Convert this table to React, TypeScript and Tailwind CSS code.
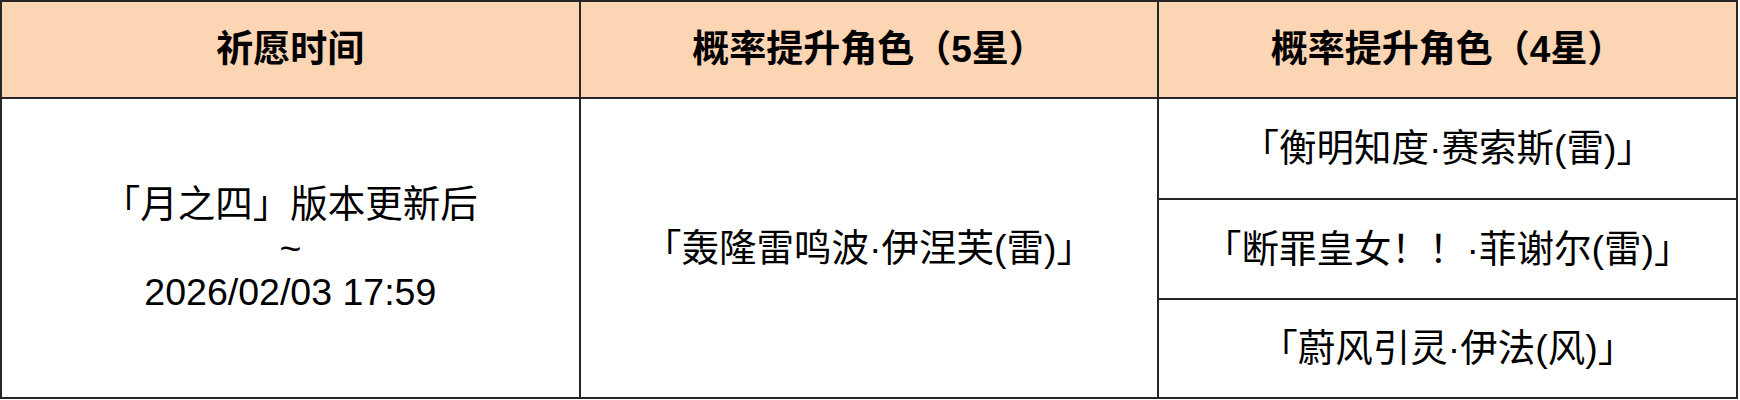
import React from 'react';

const font = 'font-["Liberation_Sans","Noto_Sans_CJK_SC",sans-serif]';

const fourStar = [
  '「衡明知度·赛索斯(雷)」',
  '「断罪皇女！！·菲谢尔(雷)」',
  '「蔚风引灵·伊法(风)」',
];

const App: React.FC = () => {
  return (
    <div className={`bg-white w-[1740px] h-[400px] ${font} text-black`}>
      <table className="table-fixed w-[1738px] border-collapse border-2 border-[#262626]">
        <thead>
          {/* header row */}
          <tr className="h-[97px] bg-[#fcd5b4]">
            <th className="border-2 border-[#262626] text-[37px] font-bold">祈愿时间</th>
            <th className="border-2 border-[#262626] text-[37px] font-bold">概率提升角色（5星）</th>
            <th className="border-2 border-[#262626] text-[37px] font-bold">概率提升角色（4星）</th>
          </tr>
        </thead>
        <tbody>
          <tr className="h-[101px]">
            <td rowSpan={3} className="border-2 border-[#262626] text-center text-[37.5px] leading-[44px]">
              <div>「月之四」版本更新后</div>
              <div>~</div>
              <div>2026/02/03 17:59</div>
            </td>
            <td rowSpan={3} className="border-2 border-[#262626] text-center text-[37.5px]">
              「轰隆雷鸣波·伊涅芙(雷)」
            </td>
            <td className="border-2 border-[#262626] text-center text-[37.5px]">{fourStar[0]}</td>
          </tr>
          <tr className="h-[100px]">
            <td className="border-2 border-[#262626] text-center text-[37.5px]">{fourStar[1]}</td>
          </tr>
          <tr className="h-[99px]">
            <td className="border-2 border-[#262626] text-center text-[37.5px]">{fourStar[2]}</td>
          </tr>
        </tbody>
      </table>
    </div>
  );
};

export default App;
